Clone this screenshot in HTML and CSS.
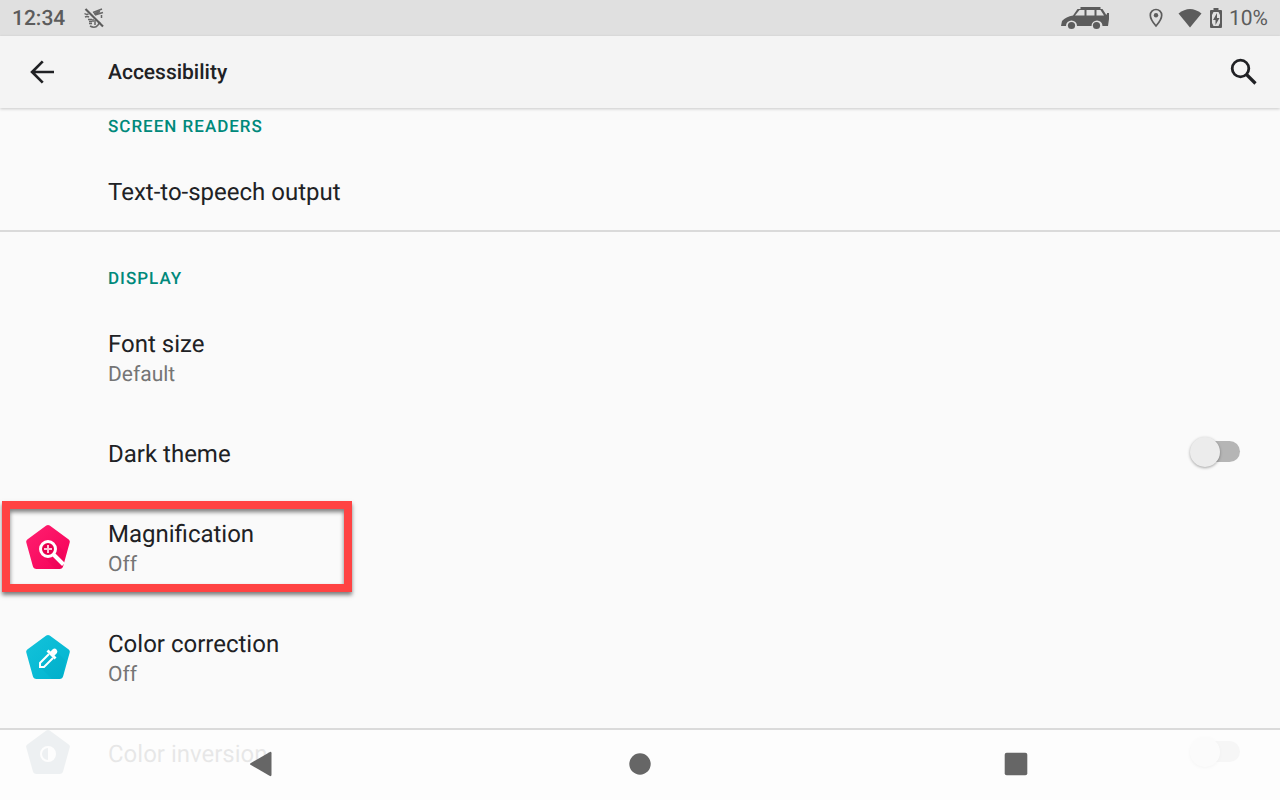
FILE: index.html
```html
<!DOCTYPE html>
<html lang="en">
<head>
    <meta charset="UTF-8">
    <meta name="viewport" content="width=device-width, initial-scale=1.0">
    <title>Accessibility</title>
    <link rel="stylesheet" href="styles.css">
</head>
<body>

    <div class="status-bar">
        <span>12:34</span>
        <svg class="icon-muted" width="22" height="22" viewBox="0 0 22 22" fill="none" stroke="#666">
            <path d="M1.500 6.500q2 1.500 4 .5M2 10q2-1 4 0M5 12.500h4M6 14.500h3M6 16.500h3M7 19q5 3 8-1l2-3M12 13v5M10 12v3M10 5.500L19 2M12 8l8-2.500M11 7l6-2.500M18.500 8v3" stroke-width="1.500"/>
            <path d="M2.500 2l17.500 17.500" stroke="#5c5c5c" stroke-width="2.200"/>
        </svg>
        <div class="status-icons">
            <svg class="icon-car" width="50" height="24" viewBox="0 0 50 24">
                <path fill="#5c5c5c" d="M0 20l1-5q4-4.500 11-5.500l4.500-6.500h3V1h20v2h2l3.500 5.500h1V7h2v6l-1 7h-5.500a5.500 5.500 0 0 0-11 0H16a5.500 5.500 0 0 0-11 0z"/>
                <path fill="#e0e0e0" d="M14 9.500l4.500-5.500h5v5.500zM25.500 4h8v5.500h-8zM35.500 4h4l3.500 5.500h-7.500z"/>
                <circle cx="10.500" cy="19.500" r="3.600" fill="#5c5c5c"/>
                <circle cx="35.500" cy="19.500" r="3.600" fill="#5c5c5c"/>
            </svg>
            <svg class="icon-location" width="14" height="20" viewBox="0 0 14 20">
                <path d="M7 1.500a5.700 5.700 0 0 0-5.700 5.700C1.300 11.400 7 18 7 18s5.700-6.600 5.700-10.800A5.700 5.700 0 0 0 7 1.500z" fill="none" stroke="#5c5c5c" stroke-width="1.700"/>
                <circle cx="7" cy="7.300" r="2.200" fill="#5c5c5c"/>
            </svg>
            <svg class="icon-wifi" width="24" height="20" viewBox="0 0 24 20">
                <path fill="#5c5c5c" d="M.5 5.500Q12-3.500 23.500 5.500L12 19.500z"/>
            </svg>
            <svg class="icon-battery" width="12" height="20" viewBox="0 0 12 20">
                <path fill="#5c5c5c" d="M3.500 0h5v2H11q1 0 1 1v16q0 1-1 1H1q-1 0-1-1V3q0-1 1-1h2.500z"/>
                <path fill="#e0e0e0" d="M3.500 4h5l1.500 3v8l-1.500 3h-5L2 15V7z"/>
                <path fill="#5c5c5c" d="M7 5L3 12h2.500v5L9.500 10H7z"/>
            </svg>
            <span>10%</span>
        </div>
    </div>

    <header class="app-bar">
        <button type="button" class="icon-button" aria-label="Back">
            <svg width="36" height="36" viewBox="0 0 24 24">
                <path fill="none" stroke="#202124" stroke-width="1.800" d="M20 12H5.500M12.500 4.900L5.400 12l7.100 7.100"/>
            </svg>
        </button>
        <h1>Accessibility</h1>
        <button type="button" class="icon-button" aria-label="Search">
            <svg width="36" height="36" viewBox="0 0 36 36" fill="none" stroke="#202124">
                <circle cx="14.500" cy="14.500" r="8.300" stroke-width="2.800"/>
                <path d="M20.500 20.500l9 9" stroke-width="3.200"/>
            </svg>
        </button>
    </header>

    <main class="settings">
        <section>
            <h2>SCREEN READERS</h2>
            <a href="#" class="row">
                <span class="row-text"><span class="title">Text-to-speech output</span></span>
            </a>
        </section>

        <section>
            <h2>DISPLAY</h2>
            <a href="#" class="row row-tall">
                <span class="row-text">
                    <span class="title">Font size</span>
                    <span class="summary">Default</span>
                </span>
            </a>
            <div class="row">
                <label class="row-text title" for="dark-theme">Dark theme</label>
                <input type="checkbox" class="switch" id="dark-theme">
            </div>
            <a href="#" class="row row-tall">
                <svg class="row-icon" width="48" height="48" viewBox="0 0 48 48">
                    <defs>
                        <linearGradient id="pink" x1="0" y1="0" x2="1" y2="1">
                            <stop offset="0" stop-color="#ff2070"/>
                            <stop offset="1" stop-color="#f50057"/>
                        </linearGradient>
                    </defs>
                    <path fill="url(#pink)" d="M22.300 2.600q1.700-1.200 3.400 0l19 13.800q1.700 1.200 1 3.200l-6.500 23.400q-.7 3-3.700 3H12.500q-3 0-3.700-3L2.300 19.600q-.7-2 1-3.200z"/>
                    <path fill="#d8004f" d="M18 32l13-13 9 9-1 15q-.7 3-3.500 3h-4z" opacity=".2"/>
                    <circle cx="24" cy="26" r="7.500" fill="#e8004f" stroke="#fff" stroke-width="3"/>
                    <path stroke="#ffc4d8" stroke-width="2" d="M24 22v8M20 26h8"/>
                    <path stroke="#fff" stroke-width="4" d="M29.500 31.500l10 10"/>
                </svg>
                <span class="row-text">
                    <span class="title">Magnification</span>
                    <span class="summary">Off</span>
                </span>
                <span class="highlight"></span>
            </a>
            <a href="#" class="row row-tall">
                <svg class="row-icon" width="48" height="48" viewBox="0 0 48 48">
                    <defs>
                        <linearGradient id="teal" x1="0" y1="0" x2="1" y2="1">
                            <stop offset="0" stop-color="#14c2da"/>
                            <stop offset="1" stop-color="#00b4d0"/>
                        </linearGradient>
                    </defs>
                    <path fill="url(#teal)" d="M22.300 2.600q1.700-1.200 3.400 0l19 13.800q1.700 1.200 1 3.200l-6.500 23.400q-.7 3-3.700 3H12.500q-3 0-3.700-3L2.300 19.600q-.7-2 1-3.200z"/>
                    <path fill="#0097b2" opacity=".15" d="M16 34l16-16 9 9-2 16q-.7 3-3.500 3H28z"/>
                    <path fill="none" stroke="#fff" stroke-width="2" d="M25 21l-9 9v4h4l9-9"/>
                    <path fill="#fff" d="M22.500 18.500l2-2 2 2 2.500-2.500q2-1 3.500.5t.5 3.500l-2.500 2.500 2 2-2 2z"/>
                </svg>
                <span class="row-text">
                    <span class="title">Color correction</span>
                    <span class="summary">Off</span>
                </span>
            </a>
            <div class="row">
                <svg class="row-icon" width="48" height="48" viewBox="0 0 48 48">
                    <path fill="#607d8b" d="M22.300 2.600q1.700-1.200 3.400 0l19 13.800q1.700 1.200 1 3.200l-6.500 23.400q-.7 3-3.700 3H12.500q-3 0-3.700-3L2.300 19.600q-.7-2 1-3.200z"/>
                    <circle cx="24" cy="26" r="7" fill="#607d8b" stroke="#fff" stroke-width="2"/>
                    <path fill="#fff" d="M24 19a7 7 0 0 1 0 14z"/>
                </svg>
                <label class="row-text title" for="color-inversion">Color inversion</label>
                <input type="checkbox" class="switch" id="color-inversion">
            </div>
        </section>
    </main>

    <nav class="nav-bar">
        <button type="button" aria-label="Back">
            <svg width="28" height="28" viewBox="0 0 28 28">
                <path fill="#666" d="M.5 13.200L19.500 2.200q2-1 2 1v21.600q0 2-2 1L.5 14.800q-1-.8 0-1.600z"/>
            </svg>
        </button>
        <button type="button" aria-label="Home">
            <svg width="28" height="28" viewBox="0 0 28 28"><circle cx="14" cy="14" r="10.700" fill="#666"/></svg>
        </button>
        <button type="button" aria-label="Recent apps">
            <svg width="28" height="28" viewBox="0 0 28 28"><rect x="2.700" y="2.700" width="22.600" height="22.600" rx="2" fill="#666"/></svg>
        </button>
    </nav>

</body>
</html>
```

FILE: styles.css
```css
* {
    box-sizing: border-box;
}
body {
    margin: 0;
    height: 100vh;
    display: flex;
    flex-direction: column;
    position: relative;
    overflow: hidden;
    background-color: #fafafa;
    color: #202124;
    font-family: Roboto, sans-serif;
    text-rendering: geometricPrecision;
}
button {
    padding: 0;
    border: none;
    background: none;
    cursor: pointer;
}
svg {
    display: block;
    flex: none;
}
.status-bar {
    display: flex;
    align-items: center;
    height: 36px;
    flex: none;
    padding: 0 12px;
    background-color: #e0e0e0;
    color: #5c5c5c;
    font-size: 21px;
    font-weight: 500;
}
.status-bar span {
    padding-top: 2px;
}
.icon-muted {
    margin-left: 18px;
}
.status-icons {
    display: flex;
    align-items: center;
    margin-left: auto;
    font-weight: 400;
}
.icon-car {
    margin-right: 38px;
}
.icon-location {
    margin-right: 15px;
}
.icon-wifi {
    margin-right: 8px;
}
.icon-battery {
    margin-right: 7px;
}
.app-bar {
    display: flex;
    align-items: center;
    height: 72px;
    flex: none;
    padding: 0 18px 0 24px;
    background-color: #f4f4f4;
    box-shadow: 0 1px 3px rgba(0, 0, 0, 0.2);
    z-index: 1;
}
.app-bar h1 {
    flex: 1;
    margin: 0 0 0 48px;
    padding-top: 2px;
    font-size: 21px;
    font-weight: 500;
}
.settings {
    flex: 1;
    min-height: 0;
    overflow: hidden;
}
section + section {
    border-top: 2px solid #dadada;
}
section h2 {
    margin: 0;
    padding: 7px 108px 11px;
    color: #00897b;
    font-size: 17px;
    line-height: 24px;
    font-weight: 500;
    letter-spacing: 1px;
}
section + section h2 {
    padding-top: 35px;
}
.row {
    display: flex;
    align-items: center;
    position: relative;
    height: 80px;
    padding: 0 40px 0 108px;
    color: inherit;
    text-decoration: none;
}
.row-tall {
    height: 110px;
}
.row-icon {
    margin-left: -84px;
    margin-right: 36px;
}
.row-text {
    flex: 1;
    padding-top: 3px;
}
.title {
    display: block;
    font-size: 24px;
    line-height: 32px;
}
.summary {
    display: block;
    color: #757575;
    font-size: 21px;
    line-height: 30px;
}
.switch {
    appearance: none;
    position: relative;
    width: 50px;
    height: 30px;
    margin: 0;
    cursor: pointer;
}
.switch::before {
    content: "";
    position: absolute;
    top: 4px;
    right: 0;
    width: 42px;
    height: 21px;
    border-radius: 11px;
    background-color: #b5b5b5;
}
.switch::after {
    content: "";
    position: absolute;
    top: 0;
    left: 0;
    width: 30px;
    height: 30px;
    border-radius: 50%;
    background-color: #ececec;
    box-shadow: 0 1px 3px rgba(0, 0, 0, 0.35);
}
.switch:checked::before {
    background-color: #80c4bd;
}
.switch:checked::after {
    left: 20px;
    background-color: #00897b;
}
.highlight {
    position: absolute;
    top: 9px;
    left: 2px;
    width: 350px;
    height: 91px;
    border: 8px solid #ff4343;
    box-shadow: 0 3px 4px rgba(0, 0, 0, 0.5), inset 0 3px 4px rgba(0, 0, 0, 0.5);
}
/* translucent, the list shows through */
.nav-bar {
    position: absolute;
    left: 0;
    right: 0;
    bottom: 0;
    z-index: 2;
    display: flex;
    justify-content: space-around;
    align-items: center;
    height: 72px;
    padding: 0 76px 2px;
    border-top: 2px solid #dadada;
    background-color: rgba(253, 253, 253, 0.9);
}
```
